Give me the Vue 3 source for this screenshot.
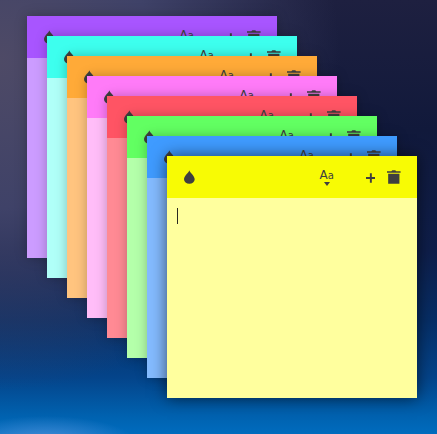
<script setup>
const notes = [
  { head: '#a855ff', body: '#cc9cff' },
  { head: '#3dffee', body: '#b0fff8' },
  { head: '#ffaa38', body: '#ffc47f' },
  { head: '#ff7bf8', body: '#ffbdf8' },
  { head: '#ff5464', body: '#ff8a94' },
  { head: '#62ff62', body: '#b4ffaa' },
  { head: '#3f9bff', body: '#84bbff' },
  { head: '#f8fb04', body: '#ffff9e' },
].map((n, i) => ({ ...n, left: 27 + i * 20 + 'px', top: 16 + i * 20 + 'px', z: i, last: i === 7 }))
</script>

<template>
  <div class="desktop">
    <section
      v-for="n in notes"
      :key="n.z"
      class="note"
      :class="{ active: n.last }"
      :style="{ left: n.left, top: n.top, background: n.body }"
    >
      <header class="head" :style="{ background: n.head }">
        <svg class="drop" viewBox="0 0 11 14" width="11" height="14">
          <path d="M5.5 0 C6 2.4 11 5.8 11 9.2 A5.5 4.8 0 0 1 0 9.2 C0 5.8 5 2.4 5.5 0Z" fill="#3f3f3f" />
        </svg>
        <div class="font">
          <span class="aa"><span class="big">A</span><span class="small">a</span></span>
          <svg viewBox="0 0 6 4" width="6" height="4"><path d="M0 0H6L3 4Z" fill="#3f3f3f" /></svg>
        </div>
        <svg class="plus" viewBox="0 0 10 10" width="10" height="10">
          <path d="M4 0H6V4H10V6H6V10H4V6H0V4H4Z" fill="#3f3f3f" />
        </svg>
        <svg class="trash" viewBox="0 0 14 14" width="14" height="14">
          <path d="M4.5 1 L5.5 0H8.5L9.5 1H14V2.6H0V1Z M1.2 3.6H12.8V14H1.2Z" fill="#3f3f3f" />
        </svg>
      </header>
      <div class="content">
        <i v-if="n.last" class="caret"></i>
      </div>
    </section>
  </div>
</template>

<style>
html, body { margin: 0; padding: 0; overflow: hidden; }
</style>

<style scoped>
.desktop {
  position: relative;
  width: 437px;
  height: 434px;
  overflow: hidden;
  background:
    radial-gradient(ellipse 90px 26px at 45px 442px, #4a8ed8 0%, rgba(60, 130, 210, 0) 100%),
    radial-gradient(ellipse 340px 330px at 0px 60px, #4e4a66 0%, #3f4268 45%, rgba(30, 50, 100, 0) 100%),
    linear-gradient(180deg, #1e2040 0%, #11193b 30%, #0e1e4a 58%, #062e66 74%, #04448a 87%, #0062b0 96%, #006cbe 100%);
}
.note {
  position: absolute;
  width: 250px;
  height: 242px;
  display: flex;
  flex-direction: column;
  box-shadow: 0 0 11px rgba(0, 0, 0, 0.26);
}
.note.active {
  box-shadow: 0 0 15px rgba(0, 0, 0, 0.6);
}
.head {
  flex: none;
  height: 42px;
  display: flex;
  align-items: center;
  padding: 0 16px 0 17px;
  box-sizing: border-box;
}
.font {
  margin-left: 125px;
  width: 14px;
  display: flex;
  flex-direction: column;
  align-items: center;
  color: #3f3f3f;
  font-family: "DejaVu Sans", sans-serif;
}
.aa { line-height: 12px; white-space: nowrap; display: flex; align-items: baseline; }
.big { font-size: 12px; }
.small { font-size: 10px; }
.plus { margin-left: 32px; margin-top: 2px; }
.trash { margin-left: 12px; }
.content { flex: 1; padding: 10px; }
.caret { display: block; width: 1px; height: 16px; background: #2a2a20; }
</style>
